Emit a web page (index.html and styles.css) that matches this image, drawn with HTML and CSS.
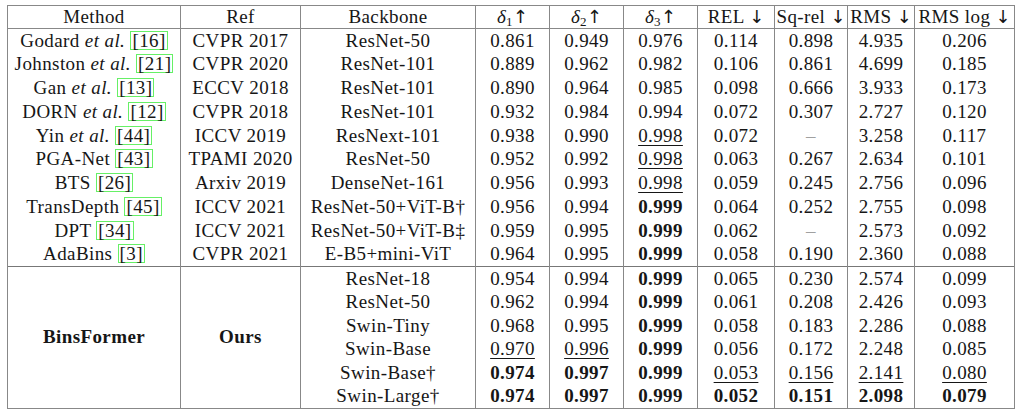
FILE: index.html
```html
<!DOCTYPE html>
<html>
<head>
<meta charset="utf-8">
<link rel="stylesheet" href="styles.css">
</head>
<body>
<table class="results">
<colgroup>
<col class="c-method"><col class="c-ref"><col class="c-bb"><col class="c-d"><col class="c-d"><col class="c-d"><col class="c-rel"><col class="c-sq"><col class="c-rms"><col class="c-log">
</colgroup>
<thead>
<tr class="head">
<th>Method</th><th>Ref</th><th>Backbone</th>
<th><i>δ</i><sub>1</sub><span class="arr">↑</span></th><th><i>δ</i><sub>2</sub><span class="arr">↑</span></th><th><i>δ</i><sub>3</sub><span class="arr">↑</span></th>
<th>REL <span class="arr">↓</span></th><th>Sq-rel <span class="arr">↓</span></th><th>RMS <span class="arr">↓</span></th><th>RMS log <span class="arr">↓</span></th>
</tr>
</thead>
<tbody class="g1">
<tr><td>Godard <i>et al.</i> <span class="cite">16</span></td><td>CVPR 2017</td><td>ResNet-50</td><td>0.861</td><td>0.949</td><td>0.976</td><td>0.114</td><td>0.898</td><td>4.935</td><td>0.206</td></tr>
<tr><td>Johnston <i>et al.</i> <span class="cite">21</span></td><td>CVPR 2020</td><td>ResNet-101</td><td>0.889</td><td>0.962</td><td>0.982</td><td>0.106</td><td>0.861</td><td>4.699</td><td>0.185</td></tr>
<tr><td>Gan <i>et al.</i> <span class="cite">13</span></td><td>ECCV 2018</td><td>ResNet-101</td><td>0.890</td><td>0.964</td><td>0.985</td><td>0.098</td><td>0.666</td><td>3.933</td><td>0.173</td></tr>
<tr><td>DORN <i>et al.</i> <span class="cite">12</span></td><td>CVPR 2018</td><td>ResNet-101</td><td>0.932</td><td>0.984</td><td>0.994</td><td>0.072</td><td>0.307</td><td>2.727</td><td>0.120</td></tr>
<tr><td>Yin <i>et al.</i> <span class="cite">44</span></td><td>ICCV 2019</td><td>ResNext-101</td><td>0.938</td><td>0.990</td><td><u>0.998</u></td><td>0.072</td><td class="dash">–</td><td>3.258</td><td>0.117</td></tr>
<tr><td>PGA-Net <span class="cite">43</span></td><td>TPAMI 2020</td><td>ResNet-50</td><td>0.952</td><td>0.992</td><td><u>0.998</u></td><td>0.063</td><td>0.267</td><td>2.634</td><td>0.101</td></tr>
<tr><td>BTS <span class="cite">26</span></td><td>Arxiv 2019</td><td>DenseNet-161</td><td>0.956</td><td>0.993</td><td><u>0.998</u></td><td>0.059</td><td>0.245</td><td>2.756</td><td>0.096</td></tr>
<tr><td>TransDepth <span class="cite">45</span></td><td>ICCV 2021</td><td>ResNet-50+ViT-B†</td><td>0.956</td><td>0.994</td><td><b>0.999</b></td><td>0.064</td><td>0.252</td><td>2.755</td><td>0.098</td></tr>
<tr><td>DPT <span class="cite">34</span></td><td>ICCV 2021</td><td>ResNet-50+ViT-B‡</td><td>0.959</td><td>0.995</td><td><b>0.999</b></td><td>0.062</td><td class="dash">–</td><td>2.573</td><td>0.092</td></tr>
<tr><td>AdaBins <span class="cite">3</span></td><td>CVPR 2021</td><td>E-B5+mini-ViT</td><td>0.964</td><td>0.995</td><td><b>0.999</b></td><td>0.058</td><td>0.190</td><td>2.360</td><td>0.088</td></tr>
</tbody>
<tbody class="g2">
<tr><td rowspan="6"><b>BinsFormer</b></td><td rowspan="6"><b>Ours</b></td><td>ResNet-18</td><td>0.954</td><td>0.994</td><td><b>0.999</b></td><td>0.065</td><td>0.230</td><td>2.574</td><td>0.099</td></tr>
<tr><td>ResNet-50</td><td>0.962</td><td>0.994</td><td><b>0.999</b></td><td>0.061</td><td>0.208</td><td>2.426</td><td>0.093</td></tr>
<tr><td>Swin-Tiny</td><td>0.968</td><td>0.995</td><td><b>0.999</b></td><td>0.058</td><td>0.183</td><td>2.286</td><td>0.088</td></tr>
<tr><td>Swin-Base</td><td><u>0.970</u></td><td><u>0.996</u></td><td><b>0.999</b></td><td>0.056</td><td>0.172</td><td>2.248</td><td>0.085</td></tr>
<tr><td>Swin-Base†</td><td><b>0.974</b></td><td><b>0.997</b></td><td><b>0.999</b></td><td><u>0.053</u></td><td><u>0.156</u></td><td><u>2.141</u></td><td><u>0.080</u></td></tr>
<tr><td>Swin-Large†</td><td><b>0.974</b></td><td><b>0.997</b></td><td><b>0.999</b></td><td><b>0.052</b></td><td><b>0.151</b></td><td><b>2.098</b></td><td><b>0.079</b></td></tr>
</tbody>
</table>
</body>
</html>
```
FILE: styles.css
```css
html, body {
  margin: 0;
  padding: 0;
  background: #ffffff;
}
body {
  padding: 5px 0 0 7px;
  font-family: "Liberation Serif", serif;
  font-size: 19px;
  color: #161616;
}
.results {
  border-collapse: collapse;
  table-layout: fixed;
  width: 1007px;
}
.c-method { width: 173px; }
.c-ref { width: 120px; }
.c-bb { width: 175px; }
.c-d { width: 74px; }
.c-rel { width: 77px; }
.c-sq { width: 73px; }
.c-rms { width: 67px; }
.c-log { width: 100px; }

.results th,
.results td {
  font-family: "Liberation Serif", serif;
  font-size: 19px;
  letter-spacing: 0.4px;
  border: 1px solid #888888;
  padding: 0;
  text-align: center;
  vertical-align: middle;
  white-space: nowrap;
  font-weight: normal;
  line-height: 20px;
}
.results tbody tr td {
  border-top: none;
  border-bottom: none;
}
.head th {
  height: 22px;
}
.g1 tr {
  height: 23.8px;
}
.g2 tr {
  height: 23.67px;
}
.g2 tr:first-child td {
  border-top: 1px solid #777777;
}
.g2 tr:last-child td,
.g2 td[rowspan] {
  border-bottom: 1px solid #888888;
}
.results b {
  font-weight: bold;
}
.results u {
  text-decoration: underline;
  text-decoration-thickness: 1px;
  text-underline-offset: 3px;
}
.results sub {
  font-size: 13px;
  vertical-align: -3px;
  line-height: 0;
}
.arr {
  font-family: "DejaVu Sans", sans-serif;
  font-size: 18px;
  letter-spacing: 0;
}
.cite {
  display: inline-block;
  border: 1px solid #66f066;
  line-height: 17px;
  padding: 0 1px;
}
.cite::before { content: "["; }
.cite::after { content: "]"; }
.dash {
  color: #a0a0a0;
}
```
